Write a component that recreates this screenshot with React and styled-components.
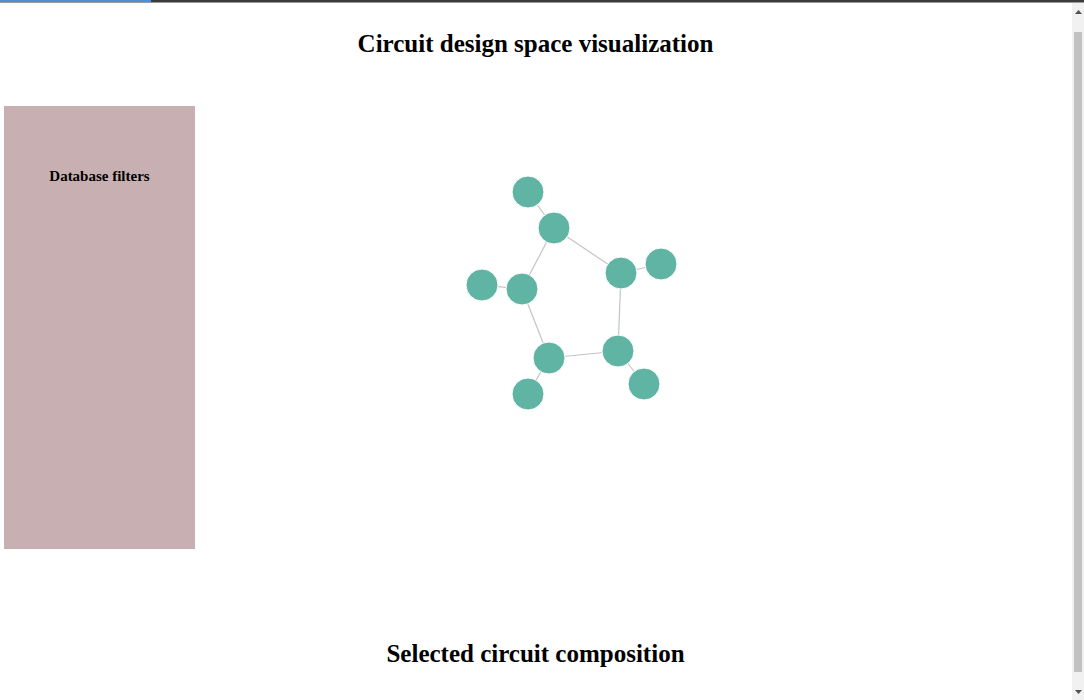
import React from "react";
import styled, { createGlobalStyle } from "styled-components";

const GlobalStyle = createGlobalStyle`
  html, body {
    margin: 0;
    padding: 0;
    background: #ffffff;
    font-family: "Liberation Serif", "Times New Roman", serif;
    color: #000;
  }
`;

const nodes = [
  { id: 1, x: 528, y: 192 },
  { id: 2, x: 554, y: 228 },
  { id: 3, x: 621, y: 273 },
  { id: 4, x: 661, y: 264 },
  { id: 5, x: 482, y: 285 },
  { id: 6, x: 522, y: 289 },
  { id: 7, x: 549, y: 358 },
  { id: 8, x: 618, y: 351 },
  { id: 9, x: 528, y: 394 },
  { id: 10, x: 644, y: 384 },
];

const links = [
  [1, 2],
  [2, 3],
  [3, 4],
  [2, 6],
  [5, 6],
  [6, 7],
  [7, 8],
  [8, 3],
  [7, 9],
  [8, 10],
];

// svg sits at x=195, y=106 on the page
const OX = 195;
const OY = 106;

function Graph() {
  const byId = (id) => nodes.find((n) => n.id === id);
  return (
    <GraphSvg viewBox="0 0 876 443">
      <g className="links">
        {links.map(([a, b]) => {
          const s = byId(a);
          const t = byId(b);
          return (
            <line
              key={a + "-" + b}
              x1={s.x - OX}
              y1={s.y - OY}
              x2={t.x - OX}
              y2={t.y - OY}
            />
          );
        })}
      </g>
      <g className="nodes">
        {nodes.map((n) => (
          <circle key={n.id} cx={n.x - OX} cy={n.y - OY} r={16} />
        ))}
      </g>
    </GraphSvg>
  );
}

function Scrollbar() {
  return (
    <ScrollTrack>
      <ScrollArrow>
        <svg width="7" height="4" viewBox="0 0 7 4">
          <polygon points="3.5,0 7,4 0,4" fill="#505050" />
        </svg>
      </ScrollArrow>
      <ScrollThumb />
      <ScrollArrow>
        <svg width="7" height="4" viewBox="0 0 7 4">
          <polygon points="0,0 7,0 3.5,4" fill="#505050" />
        </svg>
      </ScrollArrow>
    </ScrollTrack>
  );
}

function App() {
  return (
    <Page>
      <GlobalStyle />
      <TopBar>
        <Progress />
      </TopBar>
      <Title>Circuit design space visualization</Title>
      <Workspace>
        <Sidebar>
          <SidebarTitle>Database filters</SidebarTitle>
        </Sidebar>
        <Graph />
      </Workspace>
      <Title className="bottom">Selected circuit composition</Title>
      <Scrollbar />
    </Page>
  );
}

export default App;

const Page = styled.div`
  display: flex;
  flex-direction: column;
  min-height: 700px;
  padding-right: 13px;
`;

const TopBar = styled.div`
  height: 3px;
  margin-right: -13px;
  background: #3b3b3b;
  border-bottom: 1px solid #9a9a9a;
  box-sizing: border-box;
`;

const Progress = styled.div`
  width: 151px;
  height: 2px;
  background: #4f8fd8;
`;

const Title = styled.h2`
  margin: 27px 0 0;
  font-size: 25px;
  font-weight: bold;
  text-align: center;
  line-height: 28px;

  &.bottom {
    margin-top: 91px;
  }
`;

const Workspace = styled.div`
  display: flex;
  margin-top: 48px;
  padding-left: 4px;
  height: 443px;
`;

const Sidebar = styled.div`
  width: 191px;
  flex-shrink: 0;
  background: #c8b0b2;
  padding-top: 62px;
  box-sizing: border-box;
`;

const SidebarTitle = styled.h4`
  margin: 0;
  font-size: 15px;
  font-weight: bold;
  text-align: center;
`;

const GraphSvg = styled.svg`
  width: 876px;
  height: 443px;
  flex-shrink: 0;

  line {
    stroke: #c4c4c4;
    stroke-width: 1.2;
  }
  circle {
    fill: #5fb4a4;
    stroke: #ffffff;
    stroke-width: 1;
  }
`;

const ScrollTrack = styled.div`
  position: fixed;
  top: 3px;
  right: 0;
  bottom: 0;
  width: 12px;
  background: #f1f1f1;
  display: flex;
  flex-direction: column;
  align-items: center;
`;

const ScrollArrow = styled.div`
  height: 17px;
  width: 100%;
  display: flex;
  align-items: center;
  justify-content: center;
  flex-shrink: 0;
`;

const ScrollThumb = styled.div`
  flex: 1;
  width: 8px;
  margin: 12px 0 11px;
  background: #c1c1c1;
`;
